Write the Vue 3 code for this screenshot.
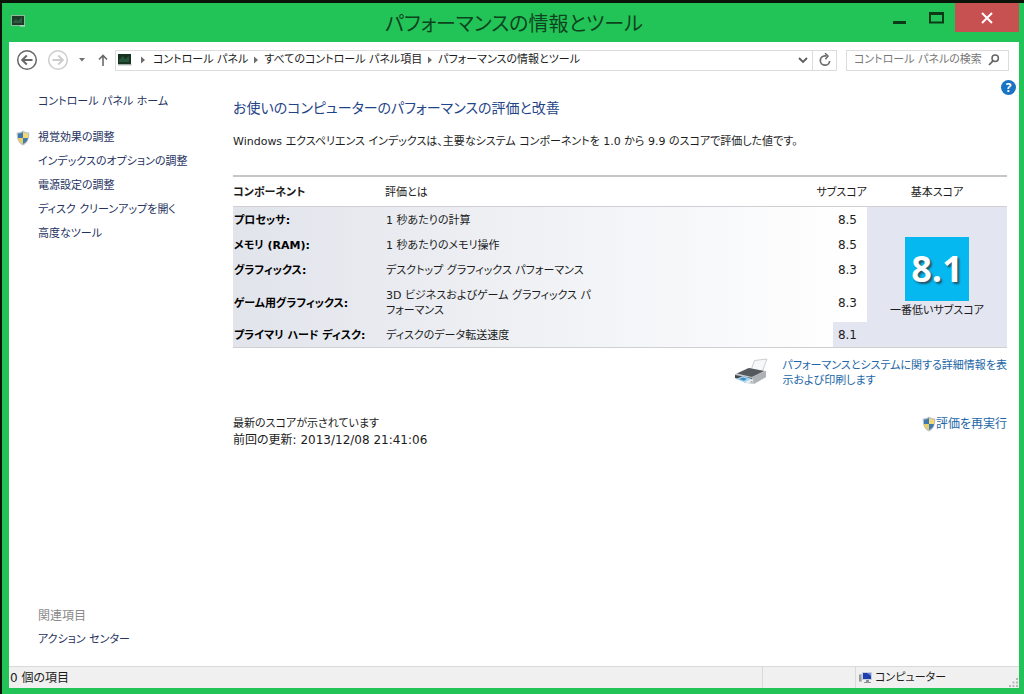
<script setup>
const crumbs = ['コントロール パネル', 'すべてのコントロール パネル項目', 'パフォーマンスの情報とツール']

const tasks = [
  { label: '視覚効果の調整', shield: true },
  { label: 'インデックスのオプションの調整' },
  { label: '電源設定の調整' },
  { label: 'ディスク クリーンアップを開く' },
  { label: '高度なツール' },
]

const rows = [
  { name: 'プロセッサ:', lines: ['1 秒あたりの計算'], score: '8.5' },
  { name: 'メモリ (RAM):', lines: ['1 秒あたりのメモリ操作'], score: '8.5' },
  { name: 'グラフィックス:', lines: ['デスクトップ グラフィックス パフォーマンス'], score: '8.3' },
  { name: 'ゲーム用グラフィックス:', lines: ['3D ビジネスおよびゲーム グラフィックス パ', 'フォーマンス'], score: '8.3' },
  { name: 'プライマリ ハード ディスク:', lines: ['ディスクのデータ転送速度'], score: '8.1', lowest: true },
]
</script>

<template>
  <div class="desktop">
    <div class="window">
      <header class="titlebar">
        <svg class="app-icon" width="14" height="12" viewBox="0 0 14 12" aria-hidden="true">
          <rect x="0.5" y="0.5" width="13" height="10" fill="#1d3a29" stroke="#8fb89c" />
          <path d="M2 7 5 4l2 2 4-4v6H2z" fill="#2f5a40" />
          <path d="M9 11h5" stroke="#cfe0d4" />
        </svg>
        <h1>パフォーマンスの情報とツール</h1>
        <div class="window-buttons">
          <button type="button" class="min" aria-label="最小化">
            <svg width="14" height="12" viewBox="0 0 14 12"><path d="M0 10.5h13" stroke="#0c3a19" stroke-width="3" /></svg>
          </button>
          <button type="button" class="max" aria-label="最大化">
            <svg width="16" height="12" viewBox="0 0 16 12"><path d="M1 1.5h13v9H1z" fill="none" stroke="#0c3a19" stroke-width="2" /><path d="M0 1.5h15" stroke="#0c3a19" stroke-width="3" /></svg>
          </button>
          <button type="button" class="close" aria-label="閉じる">
            <svg width="12" height="12" viewBox="0 0 12 12"><path d="m1 1 10 10M11 1 1 11" stroke="#fff" stroke-width="2" /></svg>
          </button>
        </div>
      </header>

      <div class="client">
        <nav class="toolbar" aria-label="ナビゲーション">
          <button type="button" aria-label="戻る">
            <svg width="22" height="22" viewBox="0 0 22 22" fill="none" stroke="#686868"><circle cx="11" cy="11" r="9.3" stroke-width="1.5" /><path d="M16.5 11H6.5M10.8 6.5 6.2 11l4.6 4.5" stroke-width="2" /></svg>
          </button>
          <button type="button" class="forward" aria-label="進む">
            <svg width="22" height="22" viewBox="0 0 22 22" fill="none" stroke="#cdcdcd"><circle cx="11" cy="11" r="9.3" stroke-width="1.5" /><path d="M5.5 11h10M11.2 6.5l4.6 4.5-4.6 4.5" stroke-width="2" /></svg>
          </button>
          <button type="button" class="recent" aria-label="最近表示した場所">
            <svg width="8" height="6" viewBox="0 0 8 6"><path d="M1 1h6L4 4.5z" fill="#707070" /></svg>
          </button>
          <button type="button" class="up" aria-label="上へ">
            <svg width="10" height="12" viewBox="0 0 10 12"><path d="M5 12V1.5M1 5.5l4-4 4 4" fill="none" stroke="#6a6a6a" stroke-width="1.6" /></svg>
          </button>
          <div class="address">
            <svg class="place" width="14" height="12" viewBox="0 0 14 12" aria-hidden="true">
              <rect width="13" height="10.5" fill="#17331f" />
              <path d="M1 6 5 2l2 3 4-3v6H1z" fill="#24553a" />
              <path d="M0 11h14" stroke="#b9c4bc" />
            </svg>
            <template v-for="crumb in crumbs" :key="crumb">
              <svg class="chevron" width="6" height="8" viewBox="0 0 6 8" aria-hidden="true"><path d="M1 0.5 5 4 1 7.5z" fill="#6d6d6d" /></svg>
              <a href="#">{{ crumb }}</a>
            </template>
            <button type="button" class="drop" aria-label="履歴を開く">
              <svg width="10" height="7" viewBox="0 0 10 7"><path d="m1 1 4 4 4-4" fill="none" stroke="#5d5d5d" stroke-width="1.8" /></svg>
            </button>
            <button type="button" class="refresh" aria-label="更新">
              <svg width="14" height="14" viewBox="0 0 14 14"><path d="M8.5 2.8H7a4.7 4.7 0 1 0 4.7 5.2" fill="none" stroke="#6a6a6a" stroke-width="1.7" /><path d="M7 0.2 10 3 7.4 6.2" fill="none" stroke="#6a6a6a" stroke-width="1.5" /></svg>
            </button>
          </div>
          <div class="search">
            <input type="text" placeholder="コントロール パネルの検索" aria-label="コントロール パネルの検索" />
            <svg width="12" height="12" viewBox="0 0 12 12" aria-hidden="true"><circle cx="7.2" cy="4.3" r="3.2" fill="none" stroke="#666" stroke-width="1.5" /><path d="M5 6.8 1 11" stroke="#666" stroke-width="1.8" /></svg>
          </div>
        </nav>

        <div class="body">
          <aside class="sidebar">
            <a class="home" href="#">コントロール パネル ホーム</a>
            <ul class="tasks">
              <li v-for="task in tasks" :key="task.label">
                <svg v-if="task.shield" class="shield" width="14" height="16" viewBox="0 0 14 16" aria-hidden="true">
                  <path d="M7 0.5C5.2 2 3 2.5 0.7 2.5c-.2 6 1.3 10.5 6.3 13 5-2.5 6.5-7 6.3-13C11 2.5 8.8 2 7 0.5z" fill="#b9c0c6" />
                  <path d="M7 2C5.5 3 4 3.5 2 3.6V8h5z" fill="#3f78ac" /><path d="M7 2c1.5 1 3 1.5 5 1.6V8H7z" fill="#f2d975" />
                  <path d="M2 8h5v6C4 12.5 2.3 10.6 2 8z" fill="#ebcf62" /><path d="M12 8H7v6c3-1.5 4.7-3.4 5-6z" fill="#3f7ab0" />
                </svg>
                <a href="#">{{ task.label }}</a>
              </li>
            </ul>
            <section class="related">
              <h2>関連項目</h2>
              <a href="#">アクション センター</a>
            </section>
          </aside>

          <main class="main">
            <h2>お使いのコンピューターのパフォーマンスの評価と改善</h2>
            <p class="intro">Windows エクスペリエンス インデックスは、主要なシステム コンポーネントを 1.0 から 9.9 のスコアで評価した値です。</p>

            <table>
              <colgroup>
                <col class="c-name" /><col /><col class="c-score" /><col class="c-base" />
              </colgroup>
              <thead>
                <tr>
                  <th scope="col" class="first">コンポーネント</th>
                  <th scope="col" colspan="2"><span class="split"><span>評価とは</span><span>サブスコア</span></span></th>
                  <th scope="col" class="base-head">基本スコア</th>
                </tr>
              </thead>
              <tbody>
                <tr v-for="(row, i) in rows" :key="row.name">
                  <th scope="row">{{ row.name }}</th>
                  <td><template v-for="(line, n) in row.lines" :key="n"><br v-if="n" />{{ line }}</template></td>
                  <td class="score" :class="{ lowest: row.lowest }">{{ row.score }}</td>
                  <td v-if="i === 0" class="base" :rowspan="rows.length">
                    <div class="tile">8.1</div>
                    <div>一番低いサブスコア</div>
                  </td>
                </tr>
              </tbody>
            </table>

            <div class="details">
              <svg width="34" height="28" viewBox="0 0 34 28" aria-hidden="true">
                <path d="M17 12 20.5 2.5 33 1l-4.5 12z" fill="#f7f8f9" stroke="#b8bcc0" stroke-width="0.7" />
                <path d="M1 16 14 10l18 3v6l-13 7-7-1-11-5z" fill="#c7cace" />
                <path d="M3 15.5 15 10l15 3-12 6z" fill="#55585c" />
                <path d="M18 19 32 13v6l-12 7z" fill="#aeb2b6" />
                <path d="M1 17l17 3v4L1 20z" fill="#44474b" />
                <path d="m2 21 7-3 9 3-6 4z" fill="#a8d3ee" /><path d="m5 21 4-1.5 4 1.3-3 2z" fill="#3c8cc5" />
                <path d="m11 24 6-3 3 1-6 3.5z" fill="#e5eef5" />
              </svg>
              <a href="#">パフォーマンスとシステムに関する詳細情報を表<br />示および印刷します</a>
            </div>

            <div class="footer">
              <div>
                <p>最新のスコアが示されています</p>
                <p class="updated">前回の更新: 2013/12/08 21:41:06</p>
              </div>
              <a href="#">
                <svg width="14" height="16" viewBox="0 0 14 16" aria-hidden="true">
                  <path d="M7 0.5C5.2 2 3 2.5 0.7 2.5c-.2 6 1.3 10.5 6.3 13 5-2.5 6.5-7 6.3-13C11 2.5 8.8 2 7 0.5z" fill="#b9c0c6" />
                  <path d="M7 2C5.5 3 4 3.5 2 3.6V8h5z" fill="#3f78ac" /><path d="M7 2c1.5 1 3 1.5 5 1.6V8H7z" fill="#f2d975" />
                  <path d="M2 8h5v6C4 12.5 2.3 10.6 2 8z" fill="#ebcf62" /><path d="M12 8H7v6c3-1.5 4.7-3.4 5-6z" fill="#3f7ab0" />
                </svg>
                評価を再実行</a>
            </div>
          </main>
          <button type="button" class="help" aria-label="ヘルプ">?</button>
        </div>

        <footer class="status">
          <span class="count">0 個の項目</span>
          <span class="blank"></span>
          <span class="computer">
            <svg width="13" height="13" viewBox="0 0 13 13" aria-hidden="true">
              <path d="M0 3h3v8H0z" fill="#bcc1c7" /><path d="M1 4v6" stroke="#6d7480" />
              <path d="M3 1h10v8H3z" fill="#c9ced8" /><path d="M4 2h8v6H4z" fill="#1f3fae" /><path d="M8 2h4v3z" fill="#6f8be0" />
              <path d="M7 9h3v2H7zM5 11h7v1H5z" fill="#8b929d" />
            </svg>
            コンピューター
            <svg class="grip" width="10" height="10" viewBox="0 0 10 10" fill="#b5b5b5" aria-hidden="true"><path d="M7 0h2v2H7zM7 3.5h2v2H7zM7 7h2v2H7zM3.5 3.5h2v2h-2zM3.5 7h2v2h-2zM0 7h2v2H0z" /></svg>
          </span>
        </footer>
      </div>
    </div>
  </div>
</template>

<style>
body {
  margin: 0;
}
</style>

<style scoped>
* {
  box-sizing: border-box;
}
.desktop {
  display: flex;
  min-height: 100vh;
  padding: 3px 0 0 2px;
  background: #0b1408;
  font: 11px/16px "DejaVu Sans", "Noto Sans CJK JP", sans-serif;
  font-feature-settings: "palt";
  color: #1c1c1c;
}
h1, h2, p, ul {
  margin: 0;
  padding: 0;
  font-weight: 400;
}
a {
  color: inherit;
  text-decoration: none;
}
button {
  display: flex;
  align-items: center;
  justify-content: center;
  padding: 0;
  border: 0;
  background: none;
}
svg {
  flex: none;
}
.window {
  flex: 1;
  display: flex;
  flex-direction: column;
  padding: 0 5px 6px 7px;
  background: #23c457;
}
.titlebar {
  display: grid;
  grid-template-columns: 1fr auto 1fr;
  height: 39px;
}
.app-icon {
  margin: 12px 0 0 2px;
}
h1 {
  font-size: 20px;
  line-height: 42px;
  color: #0d4420;
}
.window-buttons {
  display: flex;
  justify-content: flex-end;
  height: 29px;
}
.min, .max {
  width: 37px;
}
.close {
  width: 64px;
  background: #c75050;
}
.client {
  flex: 1;
  display: flex;
  flex-direction: column;
  background: #fff;
}
.toolbar {
  display: flex;
  align-items: center;
  height: 36px;
  padding: 0 10px 0 7px;
}
.forward {
  margin-left: 9px;
}
.recent {
  width: 26px;
}
.up {
  width: 16px;
  margin-right: 4px;
}
.address {
  flex: 1;
  display: flex;
  align-items: center;
  height: 21px;
  padding-left: 2px;
  border: 1px solid #dcdcdc;
}
.address a {
  line-height: 18px;
  white-space: nowrap;
}
.chevron {
  margin: 0 5px;
}
.place + .chevron {
  margin: 0 7px 0 8px;
}
.drop {
  width: 18px;
  margin-left: auto;
}
.refresh {
  width: 24px;
  height: 100%;
  border-left: 1px solid #dcdcdc;
}
.search {
  display: flex;
  align-items: center;
  width: 163px;
  height: 21px;
  margin-left: 9px;
  padding: 0 8px 0 7px;
  border: 1px solid #dcdcdc;
}
.search input {
  flex: 1;
  min-width: 0;
  padding: 0;
  border: 0;
  outline: 0;
  background: none;
  font: inherit;
  font-feature-settings: inherit;
}
.search input::placeholder {
  color: #777;
}
.body {
  flex: 1;
  display: flex;
  position: relative;
}
.sidebar {
  display: flex;
  flex-direction: column;
  width: 224px;
  padding: 16px 0 18px 29px;
  color: #26335f;
}
.tasks {
  display: flex;
  flex-direction: column;
  gap: 8px;
  margin-top: 20px;
  list-style: none;
}
.tasks li {
  display: flex;
}
.shield {
  margin-left: -22px;
  margin-right: 8px;
}
.related {
  margin-top: auto;
}
.related h2 {
  margin-bottom: 8px;
  font-size: 12px;
  color: #8a8a8a;
}
.main {
  flex: 1;
  padding: 18px 12px 0 0;
}
.main > h2 {
  font-size: 14px;
  line-height: 24px;
  color: #1f4488;
}
.intro {
  margin: 14px 0 25px;
}
table {
  width: 100%;
  border-collapse: separate;
  border-spacing: 0;
  table-layout: fixed;
  border-top: 2px solid #c6c6c6;
  border-bottom: 1px solid #cfcfd4;
  line-height: 15px;
}
.c-name {
  width: 152px;
}
.c-score {
  width: 34px;
}
.c-base {
  width: 140px;
}
th, td {
  padding: 6px 0 4px 1px;
  text-align: left;
}
thead th {
  height: 30px;
  padding: 1px 0 0;
  border-bottom: 1px solid #cfcfd4;
  font-weight: 400;
}
thead .first {
  font-weight: 700;
}
.split {
  display: flex;
  justify-content: space-between;
}
thead .base-head {
  text-align: center;
}
tbody {
  background: linear-gradient(to right, #e1e4eb, #fff 80%);
}
tbody th {
  color: #000;
}
td.score {
  padding-right: 10px;
  padding-left: 0;
  font-size: 12px;
  text-align: right;
}
td.lowest, td.base {
  background: #e3e5f0;
}
td.base {
  padding: 4px 0;
  text-align: center;
}
.tile {
  width: 64px;
  height: 64px;
  margin: 0 auto 2px;
  background: #05b9f0;
  color: #fff;
  font: 700 36px/64px "Open Sans", sans-serif;
  text-shadow: 2px 2px 2px #24566b;
}
.details {
  display: flex;
  justify-content: flex-end;
  gap: 14px;
  margin-top: 10px;
  line-height: 15px;
  color: #1c66a8;
}
.footer {
  display: flex;
  justify-content: space-between;
  margin-top: 28px;
}
.updated {
  font-size: 12px;
}
.footer a {
  display: flex;
  height: 16px;
  font-size: 12px;
  color: #1c66a8;
}
.help {
  position: absolute;
  top: 2px;
  right: 3px;
  width: 15px;
  height: 15px;
  border-radius: 50%;
  background: #1b73c4;
  color: #fff;
  font: 700 12px/15px "Open Sans", sans-serif;
}
.status {
  display: flex;
  height: 22px;
  border-top: 1px solid #d9d9d9;
  background: #f0f0f0;
  line-height: 22px;
}
.count {
  flex: 1;
  padding-left: 1px;
  font-size: 12px;
}
.blank {
  width: 93px;
  border-left: 1px solid #d9d9d9;
}
.computer {
  display: flex;
  align-items: center;
  gap: 3px;
  width: 164px;
  padding-left: 3px;
  border-left: 1px solid #d9d9d9;
}
.grip {
  align-self: flex-end;
  margin-left: auto;
}
</style>
